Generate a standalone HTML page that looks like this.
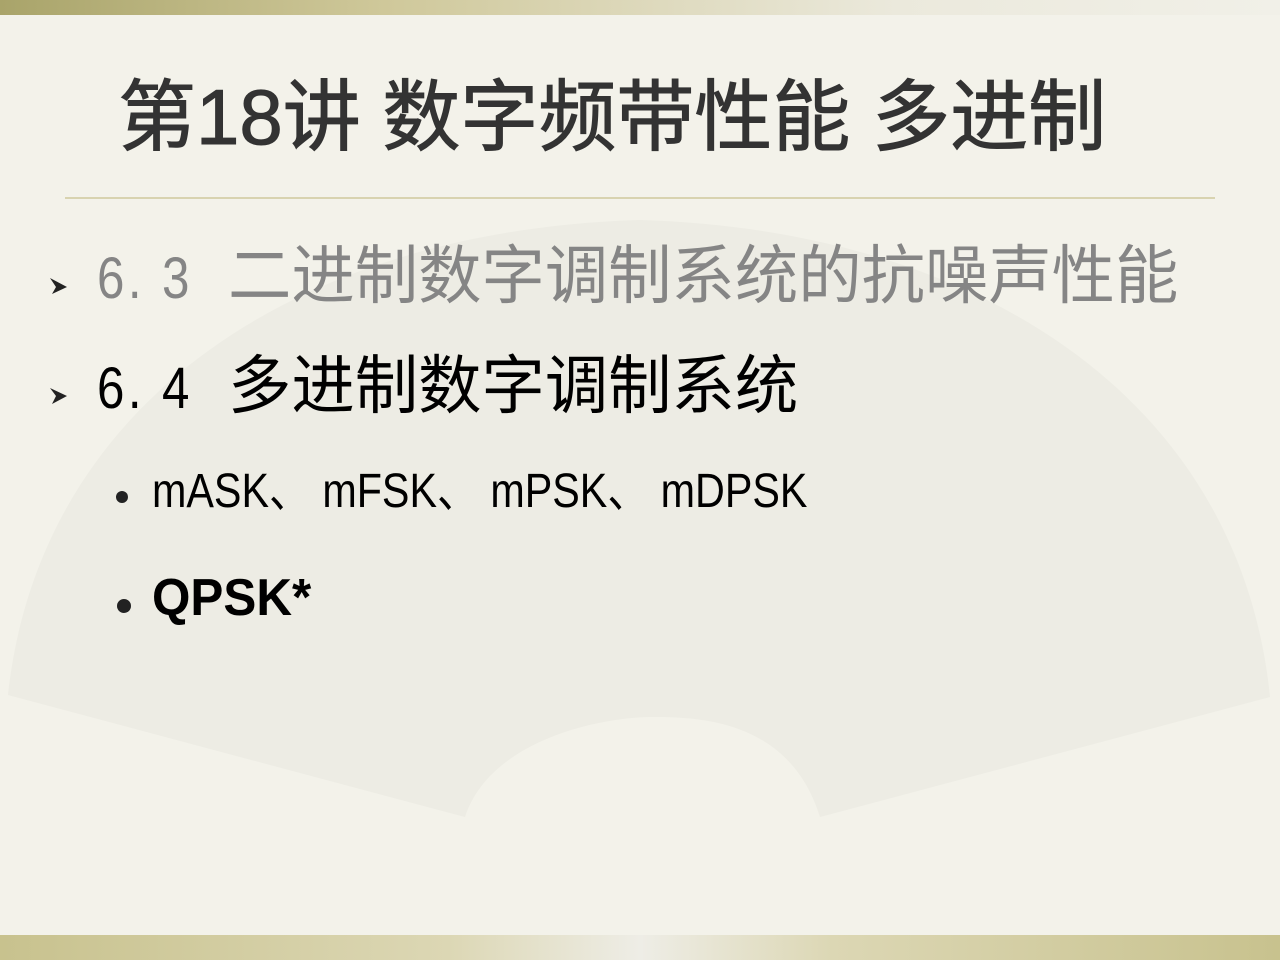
<!DOCTYPE html>
<html><head><meta charset="utf-8"><style>
html,body{margin:0;padding:0;width:1280px;height:960px;overflow:hidden;background:#f3f2ea;}
.a{position:absolute;white-space:nowrap;font-family:"Liberation Sans","Noto Sans CJK SC",sans-serif;line-height:1;}
.n{transform-origin:left top;}
.d{margin-right:14px;}
</style></head><body>
<div style="position:absolute;left:0;top:0;width:1280px;height:15px;background:linear-gradient(90deg,#a9a46a,#cfc89a 30%,#ebe9dc 70%,#f1f0e8);"></div>
<div style="position:absolute;left:0;top:935px;width:1280px;height:25px;background:linear-gradient(90deg,#c8c28e,#dcd7b4 35%,#eeede6 50%,#dcd7b4 65%,#c8c28e);"></div>
<svg style="position:absolute;left:0;top:0" width="1280" height="960">
<path d="M8,695 C40,400 300,230 640,220 C980,230 1240,400 1270,697 L820,817 C790,720 700,717 653,717 C600,717 490,740 465,817 Z" fill="#dddcd4" opacity="0.25"/>
<line x1="65" y1="198" x2="1215" y2="198" stroke="#d8d3b0" stroke-width="2"/>
<path d="M50,278 L67,287 L52,294 L56,287 Z" fill="#222"/>
<path d="M50,388 L67,396 L52,404 L56,396 Z" fill="#222"/>
<circle cx="122" cy="497" r="6" fill="#222"/>
<circle cx="124" cy="606" r="7" fill="#222"/>
</svg>
<div class="a" style="left:118px;top:78px;font-size:78px;color:#333;-webkit-text-stroke:1px #333;">第18讲 数字频带性能 多进制</div>
<div class="a n" style="left:97px;top:250px;font-size:58px;color:#858585;transform:scaleX(0.85);letter-spacing:4px">6. 3</div>
<div class="a" style="left:228px;top:244px;font-size:64px;color:#858585;transform:scaleX(0.99);transform-origin:left top">二进制数字调制系统的抗噪声性能</div>
<div class="a n" style="left:97px;top:360px;font-size:58px;color:#000;transform:scaleX(0.85);letter-spacing:4px">6. 4</div>
<div class="a" style="left:228px;top:354px;font-size:64px;color:#000;transform:scaleX(0.99);transform-origin:left top">多进制数字调制系统</div>
<div class="a n" style="left:152px;top:468px;font-size:48px;color:#000;transform:scaleX(0.86)">mASK<span class="d">、</span>mFSK<span class="d">、</span>mPSK<span class="d">、</span>mDPSK</div>
<div class="a n" style="left:152px;top:572px;font-size:52px;font-weight:bold;color:#000;transform:scaleX(0.95)">QPSK*</div>
</body></html>
